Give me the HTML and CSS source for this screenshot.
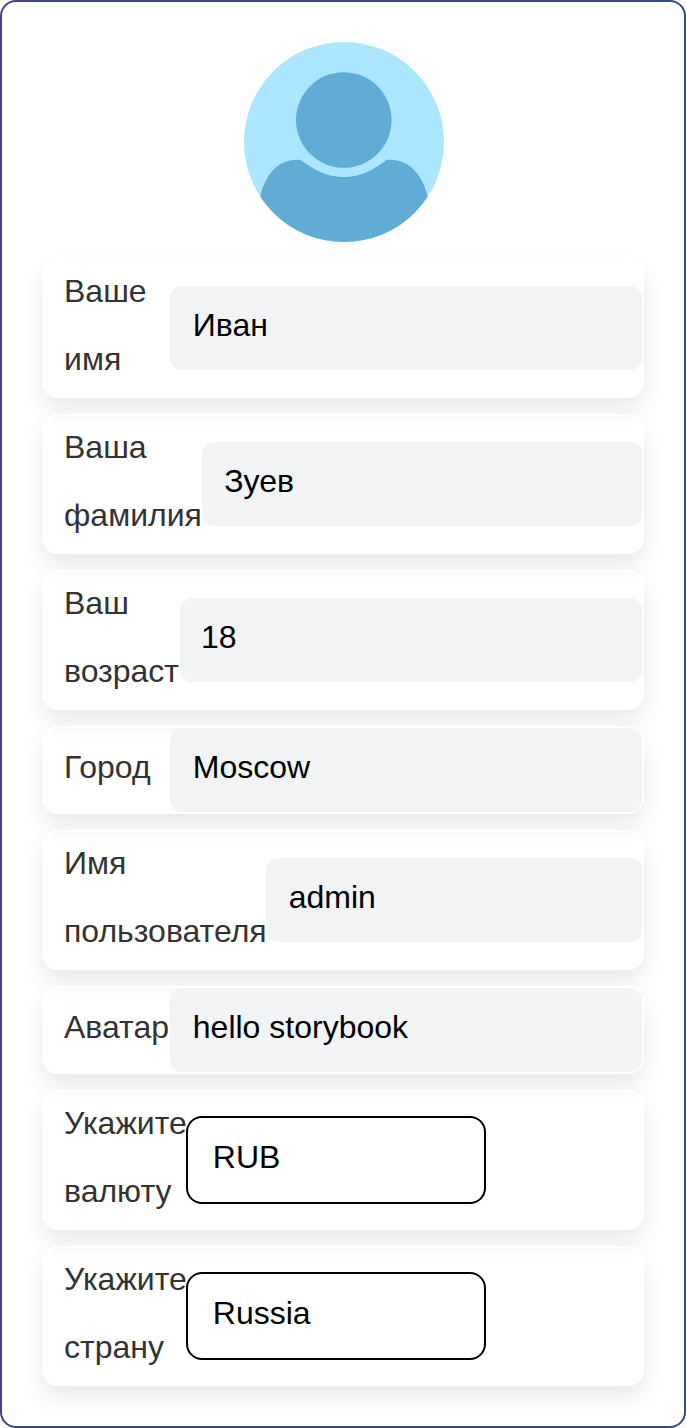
FILE: index.html
```html
<!DOCTYPE html>
<html lang="ru">
<head>
<meta charset="utf-8">
<title>Профиль</title>
<link rel="stylesheet" href="styles.css">
</head>
<body>
<main class="profile">
  <svg class="avatar" viewBox="0 0 200 200" role="img" aria-label="Аватар">
    <defs><clipPath id="round"><circle cx="100" cy="100" r="100"/></clipPath></defs>
    <g clip-path="url(#round)">
      <rect width="200" height="200" fill="#ade7ff"/>
      <circle cx="99.800" cy="78" r="47.800" fill="#60acd4"/>
      <path d="M16 156C21 133 34 116 56.500 118C68 125.500 80 135 100 135C120 135 132 125.500 142.500 118C165 116 179 133 184 156V200H16Z" fill="#60acd4"/>
    </g>
  </svg>
  <label class="card"><span class="label">Ваше имя</span><input class="input" value="Иван" readonly></label>
  <label class="card"><span class="label">Ваша фамилия</span><input class="input" value="Зуев" readonly></label>
  <label class="card card-age"><span class="label">Ваш возраст</span><input class="input" value="18" readonly></label>
  <label class="card"><span class="label">Город</span><input class="input" value="Moscow" readonly></label>
  <label class="card card-username"><span class="label">Имя пользователя</span><input class="input" value="admin" readonly></label>
  <label class="card"><span class="label">Аватар</span><input class="input" value="hello storybook" readonly></label>
  <div class="card card-choice"><span class="label">Укажите валюту</span><button class="select" type="button">RUB</button></div>
  <div class="card card-choice"><span class="label">Укажите страну</span><button class="select" type="button">Russia</button></div>
</main>
</body>
</html>
```
FILE: styles.css
```css
* {
  box-sizing: border-box;
}

body {
  margin: 0;
  background: #fafafa;
  font-family: "Liberation Sans", Arial, sans-serif;
  font-size: 32px;
}

.profile {
  display: flex;
  flex-direction: column;
  gap: 16px;
  min-height: 1428px;
  padding: 40px;
  border: 2px solid #404682;
  border-radius: 16px;
  background: #fff;
}

.avatar {
  width: 200px;
  height: 200px;
  align-self: center;
  margin-left: 2px;
}

.card {
  display: flex;
  align-items: center;
  padding-left: 20px;
  border: 2px solid #fff;
  border-radius: 16px;
  box-shadow: 0 12px 24px rgba(0, 0, 0, 0.09);
}

.label {
  flex: none;
  width: 106.4px;
  min-width: min-content;
  margin: -3px 0 3px;
  line-height: 68px;
  color: #333;
}

.input {
  flex: 1;
  min-width: 0;
  height: 84px;
  padding: 0 22.4px 6px;
  border: 0;
  border-radius: 12px;
  outline: none;
  background: #f2f3f5;
  color: #000;
  font: inherit;
}

.card-age .label {
  margin-right: 1px;
}

.card-age .input {
  padding-left: 21px;
}

.card-username .label {
  margin-right: -0.4px;
}

.card-choice .label {
  margin-right: -0.6px;
}

.select {
  width: 300px;
  height: 88px;
  margin: -2px 0;
  padding: 0 24.6px 6px;
  border: 2px solid #000;
  border-radius: 16px;
  background: transparent;
  color: #000;
  font: inherit;
  text-align: left;
}
```
